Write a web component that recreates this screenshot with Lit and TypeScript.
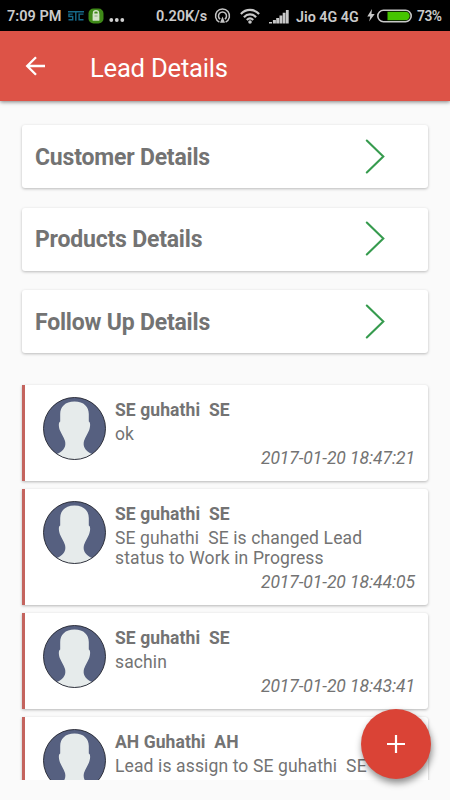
import { LitElement, html, css } from "lit";
import { customElement, property } from "lit/decorators.js";

interface Activity {
  name: string;
  message: string[];
  time: string;
}

const SECTIONS = ["Customer Details", "Products Details", "Follow Up Details"];

const ACTIVITIES: Activity[] = [
  { name: "SE guhathi  SE", message: ["ok"], time: "2017-01-20 18:47:21" },
  {
    name: "SE guhathi  SE",
    message: ["SE guhathi  SE is changed Lead", "status to Work in Progress"],
    time: "2017-01-20 18:44:05",
  },
  { name: "SE guhathi  SE", message: ["sachin"], time: "2017-01-20 18:43:41" },
  { name: "AH Guhathi  AH", message: ["Lead is assign to SE guhathi  SE"], time: "" },
];

@customElement("status-bar")
class StatusBar extends LitElement {
  static styles = css`
    :host {
      display: flex;
      align-items: center;
      height: 31px;
      box-sizing: border-box;
      padding: 2px 8px 0 7px;
      background: #000;
      color: #cbcbcb;
      font: 600 14.5px/18px Roboto, sans-serif;
      white-space: nowrap;
    }
    svg { display: block; flex: none; }
    span { flex: none; }
    .clock { width: 60px; }
    .stc { width: 16px; height: 14px; margin: -2px 4px 0 1px; }
    .lock { width: 16px; height: 16px; margin-right: 5px; margin-top: -2px; }
    .dots { width: 17px; height: 16px; margin-top: -1px; }
    .speed { margin-left: 30px; width: 58px; }
    .cast { width: 17px; height: 16px; margin-top: -1px; }
    .wifi { width: 20px; height: 16px; margin-left: 9px; margin-top: -2px; }
    .bars { width: 20px; height: 16px; margin-left: 9px; margin-top: -2px; }
    .carrier { margin-left: 7px; width: 63px; font-size: 14.3px; }
    .bolt { width: 8px; height: 13px; margin-left: 8px; margin-top: -2px; }
    .battery { width: 35px; height: 14px; margin-left: 2px; margin-top: -2px; }
    .percent { margin: -2px 0 0 5px; font-size: 13.8px; letter-spacing: -0.5px; }
  `;

  render() {
    return html`
      <span class="clock">7:09 PM</span>
      <svg class="stc" viewBox="0 0 17 14" fill="none" stroke="#176b8b" stroke-width="1.5">
        <path d="M0 2.500h17M5 5H1v2.500h4v3.500H.5M8.300 3v9M16.500 5h-4.700v6h4.700" />
      </svg>
      <svg class="lock" viewBox="0 0 16 16">
        <rect x=".5" y=".5" width="15" height="15" rx="5" fill="#3f8a18" />
        <rect x="4.600" y="5.500" width="6.800" height="7.300" rx=".6" fill="#d3e3c8" />
        <path d="M5.600 6V4.600a2.400 1.800 0 0 1 4.800 0V6" fill="none" stroke="#d3e3c8" stroke-width="1.500" />
        <path d="M6.500 8h3" stroke="#8fa583" />
      </svg>
      <svg class="dots" viewBox="0 0 17 16" fill="#d0d0d0">
        <circle cx="2.300" cy="12" r="1.900" /><circle cx="7.800" cy="12" r="1.900" /><circle cx="13.300" cy="12" r="1.900" />
      </svg>
      <span class="speed">0.20K/s</span>
      <svg class="cast" viewBox="0 0 17 16" fill="none" stroke="#c4c4c4" stroke-width="1.500">
        <path d="M5.400 14.200A7 7 0 1 1 11.600 14.200M6.100 11.200A4 4 0 1 1 10.900 11.200" />
        <path d="M8.500 8.500L6 14.800h5Z" fill="#c4c4c4" stroke="none" />
      </svg>
      <svg class="wifi" viewBox="0 0 20 16" fill="none" stroke="#c8c8c8" stroke-width="2.200">
        <path d="M.9 6C6 .6 14 .6 19.100 6M3.900 9.200c3.500-3.700 8.700-3.700 12.200 0M6.800 12c1.900-1.900 4.500-1.900 6.400 0" />
        <circle cx="10" cy="14" r="1.800" fill="#c8c8c8" stroke="none" />
      </svg>
      <svg class="bars" viewBox="0 0 20 16" fill="#c8c8c8">
        <path d="M0 14h3v1.500H0ZM3.900 12h3v3.500h-3ZM7.200 10h2.900v5.500H7.200ZM10.500 7.500h2.800v8h-2.800ZM13.700 4.700h2.800v10.800h-2.800ZM16.900 2h2.800v13.500h-2.800Z" />
      </svg>
      <span class="carrier">Jio 4G 4G</span>
      <svg class="bolt" viewBox="0 0 8 14" fill="#c8c8c8"><path d="M5 0L0 8h3.200L2 13.500 8 5.500H4.500Z" /></svg>
      <svg class="battery" viewBox="0 0 35 14">
        <rect x=".8" y="1.300" width="33.400" height="11.400" rx="5.700" fill="none" stroke="#c8c8c8" stroke-width="1.600" />
        <path d="M10.500 2.800h18a4.200 4.200 0 0 1 0 8.400h-18Z" fill="#46c400" />
      </svg>
      <span class="percent">73%</span>
    `;
  }
}

@customElement("section-card")
class SectionCard extends LitElement {
  @property() label = "";

  static styles = css`
    :host {
      display: flex;
      align-items: center;
      justify-content: space-between;
      height: 63px;
      box-sizing: border-box;
      padding: 2px 43px 0 13px;
      border-radius: 3px;
      background: #fff;
      box-shadow: 0 1px 3px rgba(0, 0, 0, 0.26);
      color: #737373;
      font: 700 23px/30px Roboto, sans-serif;
      letter-spacing: -0.2px;
    }
    svg { display: block; width: 20px; height: 36px; margin-top: -2px; }
  `;

  render() {
    return html`
      <span>${this.label}</span>
      <svg viewBox="0 0 20 36" fill="none" stroke="#369b4e" stroke-width="2.100">
        <path d="M1.800 1.500L18.300 17.500 1.800 33.500" stroke-linecap="round" />
      </svg>
    `;
  }
}

@customElement("activity-card")
class ActivityCard extends LitElement {
  @property({ attribute: false }) item!: Activity;

  static styles = css`
    :host {
      display: flex;
      box-sizing: border-box;
      padding: 12px 13px 13px 18px;
      border-left: 3.5px solid #c4645e;
      border-radius: 0 3px 3px 0;
      background: #fff;
      box-shadow: 0 1px 3px rgba(0, 0, 0, 0.28);
      color: #737373;
      font: 400 17.5px/20.6px Roboto, sans-serif;
    }
    .avatar { display: block; flex: none; width: 63px; height: 63px; margin: 0 9px 0 0; }
    .body { flex: 1; padding-top: 3px; }
    .body div { white-space: pre; letter-spacing: 0.13px; }
    .body .name { font-weight: 700; height: 24px; line-height: 21px; letter-spacing: 0.08px; }
    .body .time {
      font-style: italic;
      letter-spacing: -0.08px;
      text-align: right;
      padding-top: 3px;
      min-height: 20.6px;
    }
  `;

  render() {
    return html`
      <svg class="avatar" viewBox="0 0 63 63">
        <defs><clipPath id="disc"><circle cx="31.500" cy="31.500" r="31" /></clipPath></defs>
        <g clip-path="url(#disc)">
          <rect width="63" height="63" fill="#566080" />
          <path
            fill="#e6ebeb"
            d="M31.500 4.500C22 4.500 17.200 10 17.200 17v7.500C15.300 25 15.600 30 17 33.500c1.500 3.500 3.500 6 5 10.500 1.200 5-.5 9.500-8 13V63h35v-6c-7.500-3.500-9.200-8-8-13 1.500-4.500 3.500-7 5-10.500 1.400-3.500 1.700-8.500-.2-9V17C45.800 10 41 4.500 31.500 4.500Z"
          />
        </g>
        <circle cx="31.500" cy="31.500" r="31" fill="none" stroke="#22252f" stroke-width=".9" />
      </svg>
      <div class="body">
        <div class="name">${this.item.name}</div>
        ${this.item.message.map((line) => html`<div>${line}</div>`)}
        <div class="time">${this.item.time}</div>
      </div>
    `;
  }
}

@customElement("app-root")
class AppRoot extends LitElement {
  static styles = css`
    :host {
      display: flex;
      flex-direction: column;
      position: relative;
      height: 800px;
      overflow: hidden;
      background: #fafafa;
      font-family: Roboto, sans-serif;
    }
    .appbar {
      display: flex;
      align-items: center;
      flex: none;
      height: 70px;
      box-sizing: border-box;
      padding: 2px 0 0 25px;
      background: #dd5347;
      box-shadow: 0 1px 4px rgba(0, 0, 0, 0.5);
      color: #fff;
      z-index: 1;
    }
    .back { display: block; width: 21px; height: 20px; margin: -2px 44px 0 0; }
    .title { font-size: 25.6px; line-height: 32px; letter-spacing: -0.22px; padding-top: 1px; }
    .sections {
      display: grid;
      gap: 19.5px;
      padding: 24px 22px 0;
    }
    .feed {
      display: flex;
      flex-direction: column;
      gap: 7.5px;
      height: 411px;
      box-sizing: border-box;
      margin-top: 16px;
      padding: 16px 22px 0;
      overflow: hidden;
    }
    activity-card { flex: none; }
    .fab {
      position: absolute;
      right: 19px;
      bottom: 21px;
      display: grid;
      place-items: center;
      width: 70px;
      height: 70px;
      padding: 0;
      border: 0;
      border-radius: 50%;
      background: #da4336;
      box-shadow: 1px 4px 7px rgba(0, 0, 0, 0.45);
    }
    .fab svg { display: block; width: 18px; height: 18px; }
  `;

  render() {
    return html`
      <status-bar></status-bar>
      <header class="appbar">
        <svg class="back" viewBox="0 0 21 20" fill="none" stroke="#fff" stroke-width="2.300">
          <path d="M20 10H2.500M11 1.200L2.200 10 11 18.800" />
        </svg>
        <span class="title">Lead Details</span>
      </header>
      <main class="sections">
        ${SECTIONS.map((label) => html`<section-card .label=${label}></section-card>`)}
      </main>
      <div class="feed">
        ${ACTIVITIES.map((item) => html`<activity-card .item=${item}></activity-card>`)}
      </div>
      <button class="fab" aria-label="Add">
        <svg viewBox="0 0 18 18" stroke="#fff" stroke-width="2.200"><path d="M9 0v18M0 9h18" /></svg>
      </button>
    `;
  }
}
